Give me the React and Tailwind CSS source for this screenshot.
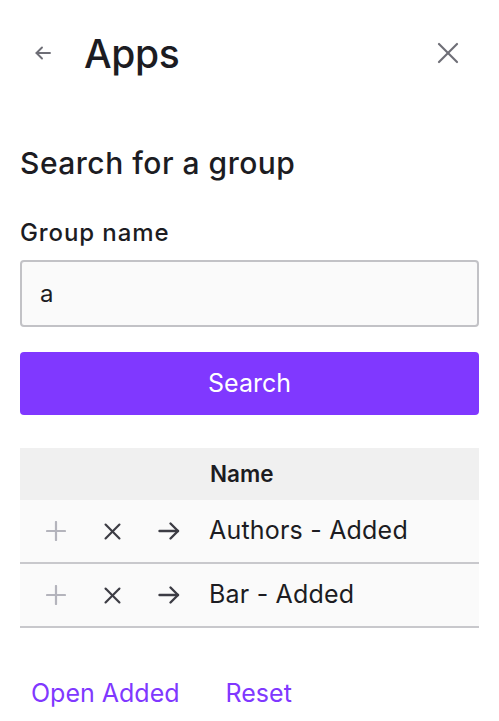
import React from 'react';

const font = { fontFamily: 'Inter, "Noto Sans", sans-serif' };

function BackArrow() {
    return (
        <svg width="20" height="20" viewBox="0 0 20 20" fill="none" stroke="#6e6e76" strokeWidth="1.9" strokeLinecap="round" strokeLinejoin="round">
            <path d="M17 10H3.5" />
            <path d="M9 4.5L3.5 10L9 15.5" />
        </svg>
    );
}

function CloseIcon({ size = 22, color = '#6e6e76', width = 2.2 }) {
    return (
        <svg width={size} height={size} viewBox="0 0 22 22" fill="none" stroke={color} strokeWidth={width} strokeLinecap="round">
            <path d="M2 2L20 20" />
            <path d="M20 2L2 20" />
        </svg>
    );
}

function PlusIcon() {
    return (
        <svg width="20" height="20" viewBox="0 0 20 20" fill="none" stroke="#b4b4bc" strokeWidth="2.2" strokeLinecap="round">
            <path d="M10 1V19" />
            <path d="M1 10H19" />
        </svg>
    );
}

function ArrowRight() {
    return (
        <svg width="22" height="20" viewBox="0 0 22 20" fill="none" stroke="#3c3c44" strokeWidth="2.4" strokeLinecap="round" strokeLinejoin="round">
            <path d="M1.5 10H20" />
            <path d="M12.5 2.5L20 10L12.5 17.5" />
        </svg>
    );
}

export default function App() {
    const rows = ['Authors - Added', 'Bar - Added'];

    return (
        <div className="w-[499px] h-[721px] bg-white text-[#1c1c22] overflow-hidden" style={font}>
            {/* header */}
            <div className="flex items-center h-[106px] pl-[33px] pr-[40px]">
                <BackArrow />
                <h1 className="ml-[31px] text-[39px] font-medium tracking-[-0.4px] leading-none">Apps</h1>
                <div className="ml-auto">
                    <CloseIcon />
                </div>
            </div>

            <div className="px-5">
                <h2 className="mt-[39px] text-[30px] font-medium leading-[36px] tracking-[0.5px]">Search for a group</h2>

                <label className="block mt-[37px] text-[24px] font-medium leading-[30px] tracking-[0.9px]">Group name</label>
                <div className="mt-[12px] h-[67px] flex items-center px-[18px] bg-[#fafafa] border-2 border-[#c2c2c6] rounded-[4px] text-[24px]">
                    a
                </div>

                <button className="mt-[25px] w-full h-[63px] rounded-[4px] bg-[#8038ff] text-white text-[25px]">
                    Search
                </button>

                {/* results table */}
                <div className="mt-[33px]">
                    <div className="h-[52px] bg-[#f0f0f0] flex items-center">
                        <div className="w-[190px]" />
                        <div className="text-[22.5px] font-semibold">Name</div>
                    </div>
                    {rows.map((name) => (
                        <div key={name} className="h-[64px] bg-[#fafafa] border-b-2 border-[#c8c8cc] flex items-center">
                            <div className="w-[26px]" />
                            <PlusIcon />
                            <div className="w-[38px]" />
                            <CloseIcon size={17} color="#3c3c44" width={2.8} />
                            <div className="w-[37px]" />
                            <ArrowRight />
                            <div className="ml-[29px] text-[25px] tracking-[0.2px]">{name}</div>
                        </div>
                    ))}
                </div>

                <div className="mt-[47px] flex items-center gap-[46px] pl-[11px] text-[25px] text-[#8038ff]">
                    <span>Open Added</span>
                    <span>Reset</span>
                </div>
            </div>
        </div>
    );
}
